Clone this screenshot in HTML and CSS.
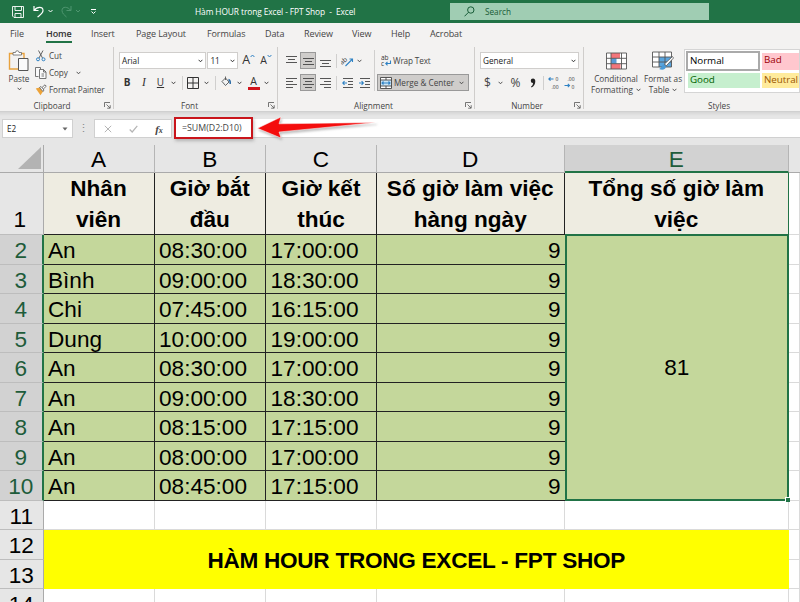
FILE: index.html
```html
<!DOCTYPE html>
<html lang="vi">
<head>
<meta charset="utf-8">
<title>Hàm HOUR trong Excel - FPT Shop - Excel</title>
<link rel="stylesheet" href="styles.css">
</head>
<body>
<svg class="defs" width="0" height="0">
  <symbol id="chev" viewBox="0 0 5 4"><path d="M.6.8 2.5 2.8 4.4.8" fill="none" stroke="currentColor" stroke-width=".9"/></symbol>
  <symbol id="launch" viewBox="0 0 7 7"><path d="M.5 5V.5H6M2.5 2.5l3.5 3.5M6.2 3.2v3h-3" fill="none" stroke="#555" stroke-width=".8"/></symbol>
</svg>

<header class="titlebar">
  <svg class="quick" width="100" height="23" viewBox="0 0 100 23" fill="none" stroke="#fff">
    <path d="M12.5 6.5h11v11h-9.500l-1.500-1.500zM15 6.500v4h6.500v-4M15 17.500v-4h6v4" stroke-width=".9"/>
    <path d="M34 6v4.500h4.500M34.300 10.300C37 6.500 43 6 43 10.500c0 3-3 4.500-5.500 6.500" stroke-width="1.200"/>
    <path d="M48.500 10l2 2 2-2" stroke-width="1"/>
    <g stroke="#4f9670"><path d="M71 6v4.500h-4.500M70.700 10.300C68 6.500 62 6 62 10.500c0 3 2.500 4.500 4.500 6.500"/><path d="M76 10l2 2 2-2"/></g>
    <path d="M91 9.500h5M91.500 11.500l2 2 2-2" stroke-width="1"/>
  </svg>
  <div class="doc">Hàm HOUR trong Excel - FPT Shop&nbsp; -&nbsp; Excel</div>
  <div class="search">
    <svg width="11" height="11" viewBox="0 0 11 11" fill="none" stroke="#185c37"><circle cx="6.800" cy="4" r="3.200"/><path d="M4.500 6.300.5 10.300"/></svg>
    <span>Search</span>
  </div>
</header>

<nav class="tabs">
  <span>File</span><span class="on">Home</span><span>Insert</span><span>Page Layout</span><span>Formulas</span><span>Data</span><span>Review</span><span>View</span><span>Help</span><span>Acrobat</span>
</nav>

<section class="ribbon">
  <div class="group clipboard">
    <div class="clip-body">
      <div class="paste">
        <svg width="22" height="22" viewBox="0 0 22 22" fill="none"><path d="M5 3.500H1.500V19H10M13 3.500h3V8" stroke="#e8a23d" stroke-width="1.400"/><path d="M5 5V2.500h2.500a1.600 1.600 0 0 1 3.500 0H13.500V5z" fill="#fff" stroke="#666" stroke-width=".8"/><path d="M10.500 8.500h9.500v12h-9.500z" fill="#fafafa" stroke="#555"/></svg>
        <span>Paste</span>
        <svg class="cv" width="5" height="4"><use href="#chev"/></svg>
      </div>
      <div class="clip-list">
        <div><svg width="12" height="12" viewBox="0 0 12 12" fill="none"><path d="M3.500.5 7.500 8M8 .5 4 8" stroke="#555" stroke-width=".9"/><circle cx="3" cy="9.300" r="1.500" stroke="#2f82c4"/><circle cx="8.500" cy="9.300" r="1.500" stroke="#2f82c4"/></svg><span>Cut</span></div>
        <div><svg width="12" height="12" viewBox="0 0 12 12" fill="#fafafa" stroke="#555" stroke-width=".8"><path d="M3.500 9.500H.5v-9h5v2"/><path d="M4.500 2.500h4l2.500 2.500v6.500H4.500zM8.500 2.500V5H11M6.500 7h2.500M6.500 9h2.500"/></svg><span>Copy</span><svg class="cv far" width="5" height="4"><use href="#chev"/></svg></div>
        <div><svg width="12" height="12" viewBox="0 0 12 12"><path d="M.8 4.500 4.500 3.500 8 7.500 5.500 11.200z" fill="#eda338"/><path d="M4.500 3.500 8 7.500 9 6 6 2.500zM7 3.500 10 .8l1.200 1.500L8.300 5" fill="#fff" stroke="#555" stroke-width=".8"/></svg><span>Format Painter</span></div>
      </div>
    </div>
    <div class="label"><span>Clipboard</span><svg width="7" height="7"><use href="#launch"/></svg></div>
  </div>

  <div class="group font">
    <div class="row r1">
      <div class="combo face"><span>Arial</span><svg width="5" height="4"><use href="#chev"/></svg></div>
      <div class="combo size"><span>11</span><svg width="5" height="4"><use href="#chev"/></svg></div>
      <div class="grow">A<svg width="5" height="4" viewBox="0 0 5 4"><path d="M.6 3 2.500 1l1.900 2" fill="none" stroke="#2f82c4"/></svg></div>
      <div class="grow small">A<svg width="5" height="4" viewBox="0 0 5 4"><path d="M.6 1 2.500 3l1.900-2" fill="none" stroke="#2f82c4"/></svg></div>
    </div>
    <div class="row r2">
      <b>B</b><i>I</i><u>U</u><svg width="5" height="4"><use href="#chev"/></svg><hr>
      <svg width="12" height="12" viewBox="0 0 12 12" fill="none" stroke="#333"><path d="M.5.5h11v11H.5zM6 .5v11M.5 6h11"/></svg>
      <svg width="5" height="4"><use href="#chev"/></svg><hr>
      <svg width="12" height="15" viewBox="0 0 12 15" fill="none"><path d="M2 6.500 5.500 3l3.500 4-3.500 3.500zM5.500 5V1.500" stroke="#555" stroke-width=".9"/><path d="M8.500 4.500c1.500.5 2 2 1.700 4.500" stroke="#2c6ca5" stroke-width="1.500"/><path d="M1 13h10" stroke="#fbf3ec" stroke-width="2.500"/></svg>
      <svg width="5" height="4"><use href="#chev"/></svg>
      <span class="ink">A</span>
      <svg width="5" height="4"><use href="#chev"/></svg>
    </div>
    <div class="label"><span>Font</span><svg width="7" height="7"><use href="#launch"/></svg></div>
  </div>

  <div class="group align">
    <div class="align-body">
      <div class="align-icons">
        <svg width="11" height="14" viewBox="0 0 11 14"><path d="M0 2.500h11M2 5.500h7M0 8.500h11"/></svg>
        <span class="pressed"><svg width="11" height="14" viewBox="0 0 11 14"><path d="M0 4.500h11M2 7.500h7M0 10.500h11"/></svg></span>
        <svg width="11" height="14" viewBox="0 0 11 14"><path d="M0 6.500h11M2 9.500h7M0 12.500h11"/></svg>
        <hr>
        <svg width="13" height="13" viewBox="0 0 13 13"><text x="-1" y="8" class="tiny ab" transform="rotate(-42 4 7)">ab</text><path class="blue" d="M4.500 12 11.500 5M8.500 5h3v3"/></svg>
        <svg class="near" width="5" height="4"><use href="#chev"/></svg>
        <svg width="11" height="14" viewBox="0 0 11 14"><path d="M0 2.500h11M0 5.500h7M0 8.500h11M0 11.500h7"/></svg>
        <span class="pressed"><svg width="11" height="14" viewBox="0 0 11 14"><path d="M0 2.500h11M2 5.500h7M0 8.500h11M2 11.500h7"/></svg></span>
        <svg width="11" height="14" viewBox="0 0 11 14"><path d="M0 2.500h11M4 5.500h7M0 8.500h11M4 11.500h7"/></svg>
        <hr>
        <svg width="11" height="12" viewBox="0 0 11 12"><path d="M1 1.500h10M6 4.500h5M6 7.500h5M1 10.500h10"/><path class="blue" d="M5 6H.8M2.500 4.200.8 6l1.700 1.800"/></svg>
        <svg width="11" height="12" viewBox="0 0 11 12"><path d="M1 1.500h10M6 4.500h5M6 7.500h5M1 10.500h10"/><path class="blue" d="M0 6h4.300M2.600 4.200 4.300 6 2.600 7.800"/></svg>
      </div>
      <div class="merge-col">
        <div class="wrap"><svg width="11" height="13" viewBox="0 0 11 13"><text x="0" y="5.500" class="tiny ab">ab</text><text x="0" y="12" class="tiny ab">c</text><path class="blue" d="M9.500 6.500v3H4.800M6.500 7.800 4.800 9.500l1.700 1.800"/></svg><span>Wrap Text</span></div>
        <div class="merge"><svg width="12" height="12" viewBox="0 0 12 12"><rect x=".5" y=".5" width="11" height="11" fill="#fff"/><rect x=".5" y="3" width="11" height="6" fill="#cbe6f7"/><path d="M.5.5h11v11H.5zM.5 3h11M.5 9h11M6 .5V3M6 9v2.500"/><path class="blue" d="M2 6h8M3.500 4.500 2 6l1.500 1.500M8.500 4.500 10 6 8.500 7.500"/></svg><span>Merge &amp; Center</span><svg width="5" height="4"><use href="#chev"/></svg></div>
      </div>
    </div>
    <div class="label"><span>Alignment</span><svg width="7" height="7"><use href="#launch"/></svg></div>
  </div>

  <div class="group number">
    <div class="combo"><span>General</span><svg width="5" height="4"><use href="#chev"/></svg></div>
    <div class="num-row">
      <span>$</span><svg width="5" height="4"><use href="#chev"/></svg><span>%</span><svg width="6" height="10" viewBox="0 0 6 10"><path d="M3 .5A2.200 2.200 0 0 0 3 5c0 1.800-.8 2.800-2 3.600l.5.9C4 8.300 5.300 6.300 5.300 3.200 5.300 1.500 4.400.5 3 .5z" fill="#222"/></svg><hr>
      <svg width="12" height="13" viewBox="0 0 12 13"><path class="blue" d="M5.500 3H.8M2.500 1.300.8 3l1.700 1.700"/><text x="7.500" y="5" class="tiny">0</text><text x="3.500" y="12.500" class="tiny">.00</text></svg>
      <svg width="12" height="13" viewBox="0 0 12 13"><path class="blue" d="M.5 9.500h5M3.800 7.800 5.500 9.500l-1.700 1.700"/><text x="3.500" y="5" class="tiny">.00</text><text x="7.500" y="12.500" class="tiny">0</text></svg>
    </div>
    <div class="label"><span>Number</span><svg width="7" height="7"><use href="#launch"/></svg></div>
  </div>

  <div class="group styles">
    <div class="style-body">
      <div class="big cond">
        <svg width="21" height="18" viewBox="0 0 21 18"><path d="M.5 1h20v16H.5z" fill="#fff"/><path d="M5 1h9v5.300H5zM5 11.700h9.500V17H5z" fill="#f3767b"/><path d="M5 6.300h5.500v5.400H5z" fill="#5b9bd5"/><path d="M.5 1h20v16H.5zM.5 6.300h20M.5 11.700h20M5 1v16M15.500 1v16" fill="none" stroke="#555" stroke-width=".9"/></svg>
        <span>Conditional</span><span>Formatting <svg width="5" height="4"><use href="#chev"/></svg></span>
      </div>
      <div class="big tbl">
        <svg width="22" height="20" viewBox="0 0 22 20"><path d="M.5 1h19v15H.5z" fill="#fff"/><path d="M7 6h12.500v10H7z" fill="#5aa5de"/><path d="M.5 1h19v15H.5zM.5 6h19M.5 11h19M7 1v15M13 1v15" fill="none" stroke="#555" stroke-width=".9"/><path d="M20.500 5.500 12.500 13l1.800 1.800L21.500 7z" fill="#fff" stroke="#555" stroke-width=".8"/><path d="M12 13.500c-2 0-2 3-5 4.500 3 1.500 6.500 1 7-2.500z" fill="#4a9ad8"/></svg>
        <span>Format as</span><span>Table <svg width="5" height="4"><use href="#chev"/></svg></span>
      </div>
      <div class="gallery">
        <span class="normal">Normal</span><span class="bad">Bad</span><span class="good">Good</span><span class="neutral">Neutral</span>
      </div>
    </div>
    <div class="label"><span>Styles</span></div>
  </div>
</section>

<section class="formula">
  <div class="namebox"><span>E2</span><svg width="6" height="4" viewBox="0 0 6 4"><path d="M.5.5h5L3 3.500z" fill="#666"/></svg></div>
  <div class="dots">⋮</div>
  <div class="fxbox">
    <svg width="8" height="8" viewBox="0 0 8 8"><path d="m.8.8 6.400 6.400M7.200.8.8 7.200" fill="none" stroke="#b5b5b5"/></svg>
    <svg width="9" height="8" viewBox="0 0 9 8"><path d="m.7 4.500 2.500 2.500L8.300.8" fill="none" stroke="#b5b5b5" stroke-width="1.200"/></svg>
    <span class="fx">f<small>x</small></span>
  </div>
  <div class="input"><span>=SUM(D2:D10)</span></div>
  <div class="mark"></div>
  <svg class="arrow" width="124" height="28" viewBox="254 114 124 28"><path d="M257.500 128.300 281 117l-2 6.800L376 122.500 279 132l2 6z" fill="#f40d0d" stroke="#fff" stroke-width=".5"/></svg>
</section>

<main class="sheet">
  <div class="corner"><svg width="23" height="22" viewBox="0 0 23 22"><path d="M23 0v22H0z" fill="#b3b3b3"/></svg></div>
  <div class="ch">A</div><div class="ch">B</div><div class="ch">C</div><div class="ch">D</div><div class="ch sel">E</div><div class="ch last"></div>

  <div class="rh first">1</div>
  <div class="th">Nhân<br>viên</div><div class="th">Giờ bắt<br>đầu</div><div class="th">Giờ kết<br>thúc</div><div class="th">Số giờ làm việc<br>hàng ngày</div><div class="th the">Tổng số giờ làm<br>việc</div><div class="e"></div>

  <div class="rh sel">2</div><div class="td">An</div><div class="td">08:30:00</div><div class="td">17:00:00</div><div class="td n">9</div><div class="total">81</div><div class="e"></div>
  <div class="rh sel">3</div><div class="td">Bình</div><div class="td">09:00:00</div><div class="td">18:30:00</div><div class="td n">9</div><div class="e"></div>
  <div class="rh sel">4</div><div class="td">Chi</div><div class="td">07:45:00</div><div class="td">16:15:00</div><div class="td n">9</div><div class="e"></div>
  <div class="rh sel">5</div><div class="td">Dung</div><div class="td">10:00:00</div><div class="td">19:00:00</div><div class="td n">9</div><div class="e"></div>
  <div class="rh sel">6</div><div class="td">An</div><div class="td">08:30:00</div><div class="td">17:00:00</div><div class="td n">9</div><div class="e"></div>
  <div class="rh sel">7</div><div class="td">An</div><div class="td">09:00:00</div><div class="td">18:30:00</div><div class="td n">9</div><div class="e"></div>
  <div class="rh sel">8</div><div class="td">An</div><div class="td">08:15:00</div><div class="td">17:15:00</div><div class="td n">9</div><div class="e"></div>
  <div class="rh sel">9</div><div class="td">An</div><div class="td">08:00:00</div><div class="td">17:00:00</div><div class="td n">9</div><div class="e"></div>
  <div class="rh sel">10</div><div class="td">An</div><div class="td">08:45:00</div><div class="td">17:15:00</div><div class="td n">9</div><div class="e"></div>
  <div class="rh">11</div><div class="e"></div><div class="e"></div><div class="e"></div><div class="e"></div><div class="e"></div><div class="e"></div>
  <div class="rh">12</div><div class="banner">HÀM HOUR TRONG EXCEL - FPT SHOP</div><div class="e"></div>
  <div class="rh">13</div><div class="e"></div>
  <div class="rh">14</div><div class="e"></div><div class="e"></div><div class="e"></div><div class="e"></div><div class="e"></div><div class="e"></div>
</main>
</body>
</html>
```
FILE: styles.css
```css
* { box-sizing: border-box; }
body { margin: 0; width: 800px; height: 602px; overflow: hidden; background: #e6e6e6; color: #444; font: 8.2px/11px "Open Sans", "Noto Sans", sans-serif; }
svg { display: block; flex: none; }
hr { margin: 0; border: 0; width: 1px; height: 14px; background: #d0cfce; }
.defs { position: absolute; }
.tiny { font: 5px "Open Sans", sans-serif; fill: #333; stroke: none; }
.tiny.ab { font-size: 6.500px; }

/* title bar */
.titlebar { display: flex; align-items: center; height: 23px; background: #217346; color: #fff; }
.quick { width: 100px; }
.doc { width: 255px; margin-left: 95px; white-space: nowrap; font-size: 8.4px; letter-spacing: -.1px; }
.search { display: flex; align-items: center; gap: 10px; width: 259px; height: 17px; padding-left: 14px; background: #a0cdb3; color: #185c37; }

/* ribbon tabs */
.tabs { display: grid; grid-template-columns: 36px 45px 45px 71px 58px 39px 48px 39px 39px 1fr; height: 24px; padding: 5px 0 0 10px; background: #f3f2f1; font-size: 9px; line-height: 12px; letter-spacing: -.1px; }
.tabs span { justify-self: start; height: 15px; white-space: nowrap; }
.tabs .on { font-weight: 600; color: #333; border-bottom: 2px solid #217346; }

/* ribbon */
.ribbon { display: flex; height: 65px; background: #f3f2f1; border-bottom: 1px solid #d0d0d0; }
.group { display: flex; flex-direction: column; height: 62px; border-right: 1px solid #cfcdcb; }
.label { display: flex; align-items: center; height: 11px; margin-top: auto; margin-bottom: -2px; padding-right: 2px; white-space: nowrap; }
.label span { flex: 1; text-align: center; }
.combo { display: flex; align-items: center; justify-content: space-between; height: 17px; padding: 0 2px; background: #fff; border: 1px solid #d0cecc; color: #222; }
.pressed { display: grid; place-items: center; width: 16px; height: 17px; background: #cfcdcb; border: 1px solid #999; }

.clipboard { width: 114px; }
.clip-body { display: flex; }
.paste { display: flex; flex-direction: column; align-items: center; width: 35px; padding: 3px 0 0 3px; }
.paste span { margin-top: 1px; }
.paste .cv { margin-top: 3px; }
.clip-list { display: grid; grid-auto-rows: 17px; }
.clip-list div { display: flex; align-items: center; gap: 2px; white-space: nowrap; letter-spacing: -.12px; }
.clip-list .far { margin-left: 6px; }

.font { width: 164px; padding-left: 5px; }
.r1 { display: flex; height: 17px; margin-top: 5px; }
.face { width: 88px; }
.size { width: 31px; margin-left: 1px; }
.grow { display: flex; margin-left: 4px; width: 17px; font-size: 12.500px; line-height: 16px; color: #333; }
.grow svg { margin-top: 2px; }
.grow.small { font-size: 10.500px; margin-left: 1px; }
.r2 { display: grid; grid-template-columns: 16px 18px 15px 10px 9px 12px 14px 4px 18px 8px 21px 5px; place-items: center; height: 17px; margin-top: 5px; font-size: 10px; color: #333; }
.r2 i { font-family: "Liberation Serif", serif; font-size: 11.500px; }
.ink { width: 12px; height: 14px; text-align: center; font-size: 10.500px; border-bottom: 3px solid #d2141c; }
.font .label { margin-left: -8px; }

.align { width: 197px; padding-left: 4px; }
.align-body { display: flex; margin-top: 5px; }
.align-icons { display: grid; grid-template: 17px 17px / 18px 16px 18px 4px 19px 15px; row-gap: 5px; place-items: center; width: 92px; }
.align-icons path, .merge-col path { fill: none; stroke: #444; stroke-width: .9; }
.align-icons .near { justify-self: start; }
.merge-col { width: 97px; height: 41px; margin-top: -2px; padding-top: 2px; border-left: 1px solid #d0cfce; }
.align path.blue, .blue { fill: none; stroke: #2f82c4; stroke-width: 1.100; }
.wrap { display: flex; align-items: center; gap: 1px; height: 17px; padding-left: 6px; letter-spacing: -.15px; }
.merge { display: flex; align-items: center; gap: 2px; width: 92px; height: 17px; margin: 5px 0 0 2px; padding-left: 2px; background: #cfcdcb; border: 1px solid #999; white-space: nowrap; }
.merge svg:last-child { margin: 0 4px 0 auto; }

.number { width: 109px; padding-left: 5px; }
.number .combo { width: 99px; margin-top: 5px; }
.num-row { display: grid; grid-template-columns: 15px 10px 21px 13px 8px 14px 17px; place-items: center; height: 17px; margin-top: 5px; font-size: 12px; }

.styles { width: 216px; border: 0; }
.style-body { display: flex; height: 46px; }
.big { display: flex; flex-direction: column; align-items: center; padding-top: 4px; white-space: nowrap; }
.big > svg { height: 20px; }
.big span { display: flex; align-items: center; gap: 3px; }
.big span:nth-child(2) { margin-top: 2px; }
.cond { width: 64px; }
.tbl { width: 30px; }
.gallery { display: grid; grid-template: 20px 18px / 74px 60px; column-gap: 2px; width: 116px; height: 44px; margin: 2px 0 0 6px; padding: 1px; border: 1px solid #d5d5d5; overflow: hidden; background: #fff; font-size: 9.800px; line-height: 14px; }
.gallery span { padding-left: 2px; margin: 2px 0 1px; letter-spacing: -.05px; }
.gallery .normal { margin: 0; border: 2px solid #aaa; line-height: 15px; color: #000; }
.gallery .bad { background: #ffc7ce; color: #9c0006; }
.gallery .good { background: #c6efce; color: #006100; margin-left: 2px; }
.gallery .neutral { background: #ffeb9c; color: #9c5700; }
.styles .label { padding-right: 0; margin-left: 54px; }

/* formula bar */
.formula { position: relative; display: flex; height: 33px; padding: 7px 0 7px 2px; background: linear-gradient(#d6d6d6, #e6e6e6 4px); }
.namebox { display: flex; align-items: center; justify-content: space-between; width: 71px; height: 19px; padding: 0 4px; background: #fff; border: 1px solid #d0d0d0; color: #222; }
.dots { width: 21px; text-align: center; font-size: 11px; line-height: 18px; color: #888; }
.fxbox { display: grid; grid-template-columns: 26px 25px 26px; place-items: center; width: 78px; height: 19px; background: #fff; border: 1px solid #d0d0d0; }
.fx { font: italic bold 11px "Liberation Serif", serif; }
.fx small { font-size: 8px; }
.input { flex: 1; margin-left: 2px; padding-left: 8px; height: 19px; line-height: 19px; font-size: 8.800px; background: #fff; border-bottom: 1px solid #d0d0d0; white-space: nowrap; }
.mark { position: absolute; left: 174px; top: 5px; width: 79px; height: 22px; border: 2px solid #c9151c; box-shadow: 1px 2px 3px #8888; }
.arrow { position: absolute; left: 254px; top: 2px; filter: drop-shadow(1px 2px 1px #8888); }

/* worksheet */
.sheet { display: grid; grid-template-columns: 43.500px 111px 111.500px 111px 187.500px 224.500px 1fr; grid-template-rows: 28px 62px repeat(13, 29.530px); height: 457px; overflow: hidden; background: #fff; font: 22.600px/28px "Liberation Sans", Arial, sans-serif; color: #000; }
.corner { display: flex; justify-content: flex-end; align-items: flex-end; padding: 0 2px 3px 0; background: #e6e6e6; border-right: 1px solid #aaa; border-bottom: 1px solid #aaa; }
.ch { text-align: center; line-height: 30px; background: #e6e6e6; border-right: 1px solid #b5b5b5; border-bottom: 1px solid #aaa; }
.ch.sel { background: #d2d2d2; color: #1e5c3a; border-bottom: 2px solid #217346; }
.ch.last { border-right: 0; }
.rh { grid-column: 1; text-align: center; line-height: 31px; background: #e6e6e6; border-right: 1px solid #aaa; border-bottom: 1px solid #bdbdbd; }
.rh.first { padding-top: 32px; line-height: 30px; padding-right: 3px; }
.rh.sel { background: #d2d2d2; color: #1e5c3a; border-right: 2px solid #217346; }
.th { text-align: center; font-weight: bold; line-height: 31px; white-space: nowrap; background: #eeece1; border-right: 1px solid #222; border-bottom: 1px solid #222; }
.the { border-color: #217346; }
.td { padding-left: 4.500px; line-height: 31px; background: #c4d79b; border-right: 1px solid #222; border-bottom: 1px solid #222; }
.td.n { padding-right: 4px; text-align: right; border-right: 0; }
.total { position: relative; grid-column: 6; grid-row: 3 / span 9; display: grid; place-items: center; padding-top: 2px; background: #c4d79b; border: 2px solid #217346; border-top-width: 1px; }
.total::after { content: ""; position: absolute; right: -3px; bottom: -3px; width: 4px; height: 4px; background: #217346; border: 1px solid #fff; box-sizing: content-box; border-right: 0; border-bottom: 0; }
.e { border-right: 1px solid #dadada; border-bottom: 1px solid #dadada; }
.banner { grid-column: 2 / span 5; grid-row: 13 / span 2; display: grid; place-items: center; padding-top: 2px; background: #ff0; font-weight: bold; letter-spacing: -.28px; }
```
